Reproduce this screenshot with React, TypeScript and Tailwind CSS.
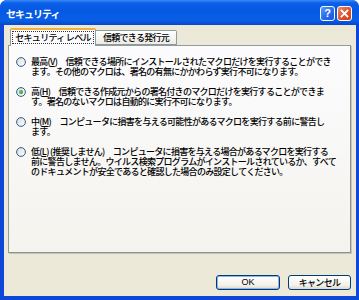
import React from "react";

function Radio({ checked }: { checked?: boolean }) {
  return (
    <svg width="10" height="10" viewBox="0 0 10 10" className="shrink-0">
      <defs>
        <linearGradient id={checked ? "rg1" : "rg0"} x1="0" y1="0" x2="1" y2="1">
          <stop offset="0" stopColor="#dcd9d0" />
          <stop offset="1" stopColor="#ffffff" />
        </linearGradient>
        <radialGradient id="gdot" cx="0.4" cy="0.4" r="0.6">
          <stop offset="0" stopColor="#6ed36e" />
          <stop offset="1" stopColor="#1c9a1c" />
        </radialGradient>
      </defs>
      <circle cx="5" cy="5" r="4.4" fill={`url(#${checked ? "rg1" : "rg0"})`} stroke="#2e5e8e" strokeWidth="1" />
      {checked && <circle cx="5" cy="5" r="2" fill="url(#gdot)" />}
    </svg>
  );
}

function Item({ checked, lines }: { checked?: boolean; lines: React.ReactNode[] }) {
  return (
    <div className="flex items-start">
      <div className="h-[10px] flex items-center">
        <Radio checked={checked} />
      </div>
      <div className="ml-[5px] leading-[10px] whitespace-nowrap">
        {lines.map((l, i) => (
          <div key={i}>{l}</div>
        ))}
      </div>
    </div>
  );
}

export default function App() {
  return (
    <div className="w-[359px] h-[300px] flex flex-col bg-[#0c47d8] rounded-t-[7px] overflow-hidden font-['Noto_Sans_CJK_JP',sans-serif] font-medium text-[9px] tracking-[-0.7px] text-black">
      {/* Title bar */}
      <div className="h-[25px] shrink-0 flex items-center pl-[6px] pr-[7px] bg-[linear-gradient(to_bottom,#3b8cf8_0%,#0c5fe8_12%,#0458e2_45%,#0a5fe6_80%,#0447cc_100%)]">
        <span className="text-white font-bold text-[10px] tracking-[-1px] pt-[1px]">
          セキュリティ
        </span>
        <div className="ml-auto flex gap-[2px] pt-[1px]">
          <div className="w-[15px] h-[15px] rounded-[3px] border border-white flex items-center justify-center bg-[linear-gradient(135deg,#5a9bff_0%,#2a6ef0_50%,#1a56d8_100%)] text-white font-bold text-[11px] leading-none font-['Liberation_Sans',sans-serif] tracking-normal">
            ?
          </div>
          <div className="w-[15px] h-[15px] rounded-[3px] border border-white flex items-center justify-center bg-[linear-gradient(135deg,#f08a68_0%,#e2552d_50%,#c8401c_100%)]">
            <svg width="9" height="9" viewBox="0 0 9 9">
              <path d="M1.5 1.5 L7.5 7.5 M7.5 1.5 L1.5 7.5" stroke="white" strokeWidth="1.8" strokeLinecap="square" />
            </svg>
          </div>
        </div>
      </div>

      {/* Body */}
      <div className="flex-1 ml-[4px] mr-[3px] mb-[4px] bg-[#ece9d8] flex flex-col pl-[4px] pr-[5px] pt-[3px]">
        {/* Tabs */}
        <div className="h-[18px] flex items-end pl-[2px] relative z-10">
          <div className="h-[18px] w-[86px] border border-[#919b9c] border-b-0 border-t-[2px] border-t-[#f5b03a] rounded-t-[2px] bg-[#fcfcfe] flex items-center justify-center pb-[1px]">
            <span className="border border-dotted border-[#333] px-[2px] leading-[11px] whitespace-nowrap">
              セキュリティ レベル
            </span>
          </div>
          <div className="h-[15px] w-[81px] border border-[#919b9c] border-l-0 rounded-tr-[2px] bg-[linear-gradient(to_bottom,#ffffff,#ecebe5)] flex items-center justify-center mb-[1px] whitespace-nowrap">
            信頼できる発行元
          </div>
        </div>

        {/* Panel */}
        <div className="-mt-[1px] h-[208px] border border-[#919b9c] border-r-[#8a9394] border-b-[#8a9394] shadow-[1px_1px_0_#c8c5b6] bg-[linear-gradient(to_bottom,#fcfcfe,#f4f3ee)] pt-[11px] pl-[7px] flex flex-col gap-[10px]">
          <Item
            lines={[
              <>最高(<span className="underline">V</span>)　信頼できる場所にインストールされたマクロだけを実行することができ</>,
              <>ます。その他のマクロは、署名の有無にかかわらず実行不可になります。</>,
            ]}
          />
          <Item
            checked
            lines={[
              <>高(<span className="underline">H</span>)　信頼できる作成元からの署名付きのマクロだけを実行することができま</>,
              <>す。署名のないマクロは自動的に実行不可になります。</>,
            ]}
          />
          <Item
            lines={[
              <>中(<span className="underline">M</span>)　コンピュータに損害を与える可能性があるマクロを実行する前に警告し</>,
              <>ます。</>,
            ]}
          />
          <Item
            lines={[
              <>低(<span className="underline">L</span>) (推奨しません)　コンピュータに損害を与える場合があるマクロを実行する</>,
              <>前に警告しません。ウイルス検索プログラムがインストールされているか、すべて</>,
              <>のドキュメントが安全であると確認した場合のみ設定してください。</>,
            ]}
          />
        </div>

        {/* Buttons */}
        <div className="pt-[22px] flex justify-end gap-[8px]">
          <div className="w-[64px] h-[15px] rounded-[3px] border border-[#003c74] bg-[linear-gradient(to_bottom,#ffffff,#f3f2ec_70%,#dcd8cc)] shadow-[inset_0_0_0_1px_#8fb3f0] flex items-center justify-center font-['Liberation_Sans',sans-serif] font-normal tracking-normal">
            OK
          </div>
          <div className="w-[63px] h-[15px] rounded-[3px] border border-[#003c74] bg-[linear-gradient(to_bottom,#ffffff,#f3f2ec_70%,#dcd8cc)] flex items-center justify-center">
            キャンセル
          </div>
        </div>
      </div>
    </div>
  );
}
